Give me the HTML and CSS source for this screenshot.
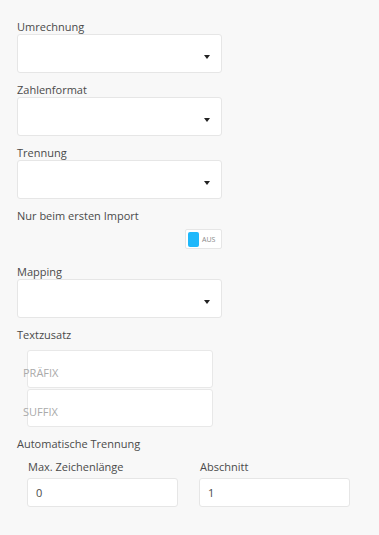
FILE: index.html
```html
<!DOCTYPE html>
<html lang="de">
<head>
    <meta charset="UTF-8">
    <meta name="viewport" content="width=device-width, initial-scale=1.0">
    <title>Import Einstellungen</title>
    <link rel="stylesheet" href="styles.css">
</head>
<body>
    <div class="panel">
        <div class="field">
            <label class="label">Umrechnung</label>
            <div class="select"><span class="caret"></span></div>
        </div>

        <div class="field">
            <label class="label">Zahlenformat</label>
            <div class="select"><span class="caret"></span></div>
        </div>

        <div class="field">
            <label class="label">Trennung</label>
            <div class="select"><span class="caret"></span></div>
        </div>

        <div class="field">
            <label class="label">Nur beim ersten Import</label>
            <div class="toggle-row">
                <div class="toggle">
                    <span class="knob"></span>
                    <span class="toggle-text">AUS</span>
                </div>
            </div>
        </div>

        <div class="field">
            <label class="label">Mapping</label>
            <div class="select"><span class="caret"></span></div>
        </div>

        <div class="field">
            <label class="label">Textzusatz</label>
            <div class="affix-group">
                <div class="affix"><span class="affix-text">PRÄFIX</span></div>
                <div class="affix"><span class="affix-text">SUFFIX</span></div>
            </div>
        </div>

        <div class="field">
            <label class="label">Automatische Trennung</label>
            <div class="split">
                <div class="split-col">
                    <label class="sublabel">Max. Zeichenlänge</label>
                    <div class="num">0</div>
                </div>
                <div class="split-col">
                    <label class="sublabel">Abschnitt</label>
                    <div class="num">1</div>
                </div>
            </div>
        </div>
    </div>
</body>
</html>
```

FILE: styles.css
```css
* {
    box-sizing: border-box;
}

body {
    margin: 0;
    padding: 0;
    background-color: #f8f8f8;
    font-family: "Open Sans", "Noto Sans", sans-serif;
    font-size: 11px;
    color: #4a4a4a;
}

.panel {
    padding: 19px 0 0 17px;
}

.field {
    display: flex;
    flex-direction: column;
    margin-bottom: 9px;
}

.label {
    line-height: 15px;
    height: 15px;
}

.select {
    position: relative;
    width: 205px;
    height: 39px;
    background-color: #ffffff;
    border: 1px solid #e6e6e6;
    border-radius: 3px;
}

.caret {
    position: absolute;
    right: 11px;
    top: 20px;
    width: 0;
    height: 0;
    border-left: 3.5px solid transparent;
    border-right: 3.5px solid transparent;
    border-top: 4px solid #222222;
}

.toggle-row {
    display: flex;
    justify-content: flex-end;
    width: 205px;
    padding-top: 6px;
    padding-bottom: 6px;
}

.toggle {
    display: flex;
    align-items: center;
    width: 37px;
    height: 20px;
    background-color: #ffffff;
    border: 1px solid #e6e6e6;
    border-radius: 2px;
}

.knob {
    width: 11px;
    height: 15px;
    margin-left: 2px;
    background-color: #1eb8fb;
    border-radius: 2px;
}

.toggle-text {
    margin-left: 3px;
    font-size: 7px;
    color: #888888;
}

.affix-group {
    display: flex;
    flex-direction: column;
    gap: 1px;
    padding: 8px 0 0 10px;
}

.affix {
    display: flex;
    align-items: flex-end;
    width: 186px;
    height: 38px;
    background-color: #ffffff;
    border: 1px solid #e8e8e8;
    border-radius: 3px;
}

.affix-text {
    margin-left: -5px;
    margin-bottom: 7px;
    color: #aaaaaa;
    font-size: 11px;
}

.split {
    display: flex;
    gap: 21px;
    padding: 8px 0 0 10px;
}

.split-col {
    display: flex;
    flex-direction: column;
    width: 151px;
}

.sublabel {
    line-height: 15px;
    padding-left: 1px;
    margin-bottom: 4px;
}

.num {
    height: 29px;
    line-height: 27px;
    padding-left: 8px;
    background-color: #ffffff;
    border: 1px solid #e6e6e6;
    border-radius: 3px;
}
```
